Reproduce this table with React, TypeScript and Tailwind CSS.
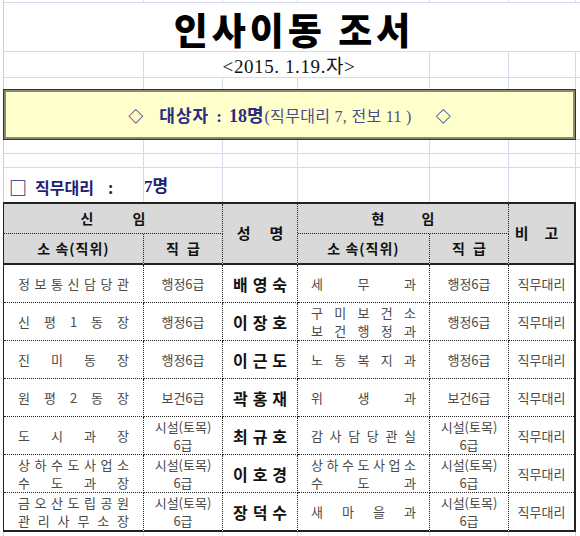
const cols = ['w-[140px]', 'w-[79px]', 'w-[75px]', 'w-[132px]', 'w-[79px]', 'w-[67px]'];

function GridRow({ h, line = true }: { h: string; line?: boolean }) {
  return (
    <div className={`flex ${h} ${line ? 'border-b border-[#d4dbe8]' : ''}`}>
      {cols.map((w, i) => (
        <div key={i} className={`${w} shrink-0 border-r border-[#d4dbe8]`} />
      ))}
      <div className="flex-1" />
    </div>
  );
}

type Row = { a: string[]; b: string[]; name: string; c: string[]; d: string[] };

const rows: Row[] = [
  { a: ['정보통신담당관'], b: ['행정6급'], name: '배영숙', c: ['세무과'], d: ['행정6급'] },
  { a: ['신평1동장'], b: ['행정6급'], name: '이장호', c: ['구미보건소', '보건행정과'], d: ['행정6급'] },
  { a: ['진미동장'], b: ['행정6급'], name: '이근도', c: ['노동복지과'], d: ['행정6급'] },
  { a: ['원평2동장'], b: ['보건6급'], name: '곽홍재', c: ['위생과'], d: ['보건6급'] },
  { a: ['도시과장'], b: ['시설(토목)', '6급'], name: '최규호', c: ['감사담당관실'], d: ['시설(토목)', '6급'] },
  { a: ['상하수도사업소', '수도과장'], b: ['시설(토목)', '6급'], name: '이호경', c: ['상하수도사업소', '수도과'], d: ['시설(토목)', '6급'] },
  { a: ['금오산도립공원', '관리사무소장'], b: ['시설(토목)', '6급'], name: '장덕수', c: ['새마을과'], d: ['시설(토목)', '6급'] },
];

// 균등 분할 텍스트 (엑셀 '균등 분할' 맞춤)
function Dist({ lines }: { lines: string[] }) {
  return (
    <div className="flex w-full flex-col justify-center leading-[18px]">
      {lines.map((l, i) => (
        <div key={i} className="flex justify-between">
          {l.split('').map((ch, j) => (
            <span key={j}>{ch}</span>
          ))}
        </div>
      ))}
    </div>
  );
}

function Center({ lines }: { lines: string[] }) {
  return (
    <div className="flex flex-col items-center justify-center leading-[18px]">
      {lines.map((l, i) => (
        <span key={i}>{l}</span>
      ))}
    </div>
  );
}

const cell = 'flex items-center border-b border-r border-dotted border-[#222]';
const lastCol = 'flex items-center border-b border-dotted border-[#222]';
const solidB = 'border-b-2 [border-bottom-style:solid]';
const head = 'bg-[#d9d9d9] justify-center text-[14px] font-bold text-[#111]';
const data = 'text-[13px] text-[#4a4a4a]';

export default function App() {
  return (
    <div className="h-[536px] w-[580px] overflow-hidden bg-white font-['Noto_Sans_CJK_KR',sans-serif]">
      <div className="ml-[3px] h-full border-l border-[#c3cfe2]">
        <GridRow h="h-[3px]" />

        {/* 제목 */}
        <div className="flex h-[49px] items-center justify-center border-b border-[#d4dbe8] pl-[4px] pt-[4px]">
          <h1 className="text-[37px] leading-[40px] font-black tracking-[4px] text-black">인사이동 조서</h1>
        </div>

        {/* 날짜 */}
        <div className="flex h-[26px] border-b border-[#d4dbe8]">
          <div className="w-[140px] shrink-0 border-r border-[#d4dbe8]" />
          <div className="flex w-[286px] shrink-0 items-center justify-center border-r border-[#d4dbe8] pl-[5px] pt-[4px]">
            <span className="font-['Liberation_Serif','Noto_Sans_CJK_KR',serif] text-[19px] leading-none tracking-[0.6px] text-[#111]">
              &lt;2015. 1.19.자&gt;
            </span>
          </div>
          <div className="w-[79px] shrink-0 border-r border-[#d4dbe8]" />
          <div className="w-[67px] shrink-0 border-r border-[#d4dbe8]" />
          <div className="flex-1" />
        </div>

        <GridRow h="h-[11px]" line={false} />

        {/* 대상자 */}
        <div className="flex">
          <div className="-ml-px flex h-[51px] w-[573px] items-center justify-center border border-[#333] bg-[#ffffcc] pt-[3px] shadow-[inset_0_0_0_2px_#8a8a72]">
            <div className="flex items-baseline font-['Liberation_Serif','Noto_Sans_CJK_KR',serif] text-[#2b2b82]">
              <span className="text-[15px] font-bold">◇</span>
              <span className="ml-[16px] text-[17px] font-bold tracking-[1px]">대상자</span>
              <span className="ml-[7px] text-[17px] font-bold">:</span>
              <span className="ml-[7px] text-[18px] font-bold">18명</span>
              <span className="ml-px text-[16px] tracking-[0.3px] text-[#4b4b8c]">(직무대리 7, 전보 11 )</span>
              <span className="ml-[24px] text-[15px] font-bold">◇</span>
            </div>
          </div>
          <div className="flex-1 border-b border-[#d4dbe8]" />
        </div>

        <GridRow h="h-[14px]" />
        <GridRow h="h-[14px]" />

        {/* 직무대리 */}
        <div className="flex h-[34px]">
          <div className="flex w-[140px] shrink-0 items-center border-r border-[#d4dbe8] pl-[5px] pt-[3px] font-bold text-[#1e1e78]">
            <span className="text-[18px] leading-none">□</span>
            <span className="ml-[8px] text-[16px]">직무대리</span>
            <span className="ml-[14px] text-[16px]">:</span>
          </div>
          <div className="flex w-[79px] shrink-0 items-center border-r border-[#d4dbe8] pt-[3px] font-['Liberation_Serif','Noto_Sans_CJK_KR',serif] text-[17px] font-bold text-[#1e1e78]">
            7명
          </div>
          <div className="w-[75px] shrink-0 border-r border-[#d4dbe8]" />
          <div className="w-[132px] shrink-0 border-r border-[#d4dbe8]" />
          <div className="w-[79px] shrink-0 border-r border-[#d4dbe8]" />
          <div className="w-[67px] shrink-0 border-r border-[#d4dbe8]" />
          <div className="flex-1" />
        </div>

        {/* 표 */}
        <div className="flex">
          <div className="-ml-px grid w-[573px] grid-cols-[140px_79px_75px_132px_79px_65px] grid-rows-[30px_31px_38px_38px_38px_38px_38px_38px_39px] border-t-2 border-r-2 border-l border-[#222]">
            <div className={`${cell} ${head} col-span-2 gap-[39px]`}>
              <span>신</span>
              <span>임</span>
            </div>
            <div className={`${cell} ${head} ${solidB} row-span-2 gap-[19px] text-[15px]`}>
              <span>성</span>
              <span>명</span>
            </div>
            <div className={`${cell} ${head} col-span-2 gap-[37px]`}>
              <span>현</span>
              <span>임</span>
            </div>
            <div className={`${lastCol} ${head} ${solidB} row-span-2 gap-[16px] pr-[10px] text-[15px]`}>
              <span>비</span>
              <span>고</span>
            </div>

            <div className={`${cell} ${head} ${solidB} tracking-[1px]`}>소 속(직위)</div>
            <div className={`${cell} ${head} ${solidB} gap-[8px]`}>
              <span>직</span>
              <span>급</span>
            </div>
            <div className={`${cell} ${head} ${solidB} tracking-[1px]`}>소 속(직위)</div>
            <div className={`${cell} ${head} ${solidB} gap-[8px]`}>
              <span>직</span>
              <span>급</span>
            </div>

            {rows.map((r, i) => {
              const last = i === rows.length - 1 ? solidB : '';
              return [
                <div key={`${i}a`} className={`${cell} ${data} ${last} pl-[14px] pr-[14px]`}>
                  <Dist lines={r.a} />
                </div>,
                <div key={`${i}b`} className={`${cell} ${data} ${last} justify-center`}>
                  <Center lines={r.b} />
                </div>,
                <div key={`${i}n`} className={`${cell} ${last} justify-center gap-[5px] text-[16px] font-bold text-[#111]`}>
                  {r.name.split('').map((ch, j) => (
                    <span key={j}>{ch}</span>
                  ))}
                </div>,
                <div key={`${i}c`} className={`${cell} ${data} ${last} pl-[13px] pr-[13px]`}>
                  <Dist lines={r.c} />
                </div>,
                <div key={`${i}d`} className={`${cell} ${data} ${last} justify-center`}>
                  <Center lines={r.d} />
                </div>,
                <div key={`${i}e`} className={`${lastCol} ${data} ${last} justify-center`}>
                  직무대리
                </div>,
              ];
            })}
          </div>
          <div className="flex-1" />
        </div>

        <GridRow h="h-[5px]" line={false} />
      </div>
    </div>
  );
}
